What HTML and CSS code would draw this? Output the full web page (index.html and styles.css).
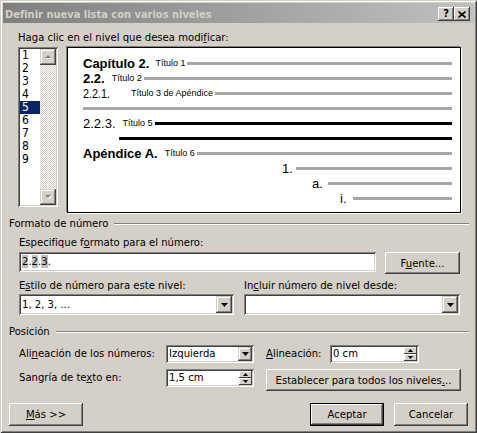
FILE: index.html
```html
<!DOCTYPE html>
<html lang="es">
<head>
<meta charset="utf-8">
<title>Definir nueva lista con varios niveles</title>
<link rel="stylesheet" href="styles.css">
</head>
<body>
<div class="window">
  <div class="titlebar">
    <span class="title">Definir nueva lista con varios niveles</span>
    <div class="cap-buttons">
      <span class="cap-btn">?</span>
      <span class="cap-btn"><svg width="8" height="7" viewBox="0 0 8 7"><path d="M0.5 0.5 L7.5 6.5 M7.5 0.5 L0.5 6.5" stroke="#000" stroke-width="1.6"/></svg></span>
    </div>
  </div>
  <div class="content">
    <section class="pick">
      <div class="label">Haga clic en el nivel que desea modi<u>f</u>icar:</div>
      <div class="pick-row">
        <div class="listbox">
          <ul class="levels">
            <li>1</li><li>2</li><li>3</li><li>4</li><li class="sel">5</li><li>6</li><li>7</li><li>8</li><li>9</li>
          </ul>
          <div class="vscroll">
            <span class="sbtn"><svg width="9" height="6" viewBox="0 0 9 6"><path d="M2 5 L5 2 L8 5 Z" fill="#fff"/><path d="M1 4 L4 1 L7 4 Z" fill="#808080"/></svg></span>
            <span class="track"></span>
            <span class="sbtn"><svg width="9" height="6" viewBox="0 0 9 6"><path d="M2 2 L8 2 L5 5 Z" fill="#fff"/><path d="M1 1 L7 1 L4 4 Z" fill="#808080"/></svg></span>
          </div>
        </div>
        <div class="preview">
          <div class="prow"><span class="num bold">Capítulo 2.</span><span class="ttl g6">Título 1</span><span class="ln"></span></div>
          <div class="prow"><span class="num bold">2.2.</span><span class="ttl g7">Título 2</span><span class="ln"></span></div>
          <div class="prow"><span class="num narrow">2.2.1.</span><span class="ttl g21">Título 3 de Apéndice</span><span class="ln"></span></div>
          <div class="prow"><span class="ln"></span></div>
          <div class="prow"><span class="num">2.2.3.</span><span class="ttl g7">Título 5</span><span class="ln black"></span></div>
          <div class="prow ind1"><span class="ln black"></span></div>
          <div class="prow"><span class="num bold">Apéndice A.</span><span class="ttl g7">Título 6</span><span class="ln"></span></div>
          <div class="prow ind2"><span class="num">1.</span><span class="ln gap3"></span></div>
          <div class="prow ind3"><span class="num">a.</span><span class="ln gap4"></span></div>
          <div class="prow ind4"><span class="num">i.</span><span class="ln gap6"></span></div>
        </div>
      </div>
    </section>

    <div class="group-title"><span>Formato de número</span><span class="groove"></span></div>
    <section class="group-body">
      <div class="field-label">Especifique f<u>o</u>rmato para el número:</div>
      <div class="format-row">
        <div class="textbox"><span class="fld">2</span>.<span class="fld">2</span>.<span class="fld">3</span>.</div>
        <button class="btn fuente">F<u>u</u>ente...</button>
      </div>
      <div class="two-col">
        <div class="col">
          <div class="field-label">E<u>s</u>tilo de número para este nivel:</div>
          <div class="select wide"><span class="val">1, 2, 3, ...</span><span class="drop"><svg width="7" height="4" viewBox="0 0 7 4"><path d="M0 0 H7 L3.5 4 Z" fill="#000"/></svg></span></div>
        </div>
        <div class="col">
          <div class="field-label">In<u>c</u>luir número de nivel desde:</div>
          <div class="select wide"><span class="val"></span><span class="drop"><svg width="7" height="4" viewBox="0 0 7 4"><path d="M0 0 H7 L3.5 4 Z" fill="#000"/></svg></span></div>
        </div>
      </div>
    </section>

    <div class="group-title pos-title"><span>Posición</span><span class="groove"></span></div>
    <section class="pos-grid">
      <div class="plabel">Ali<u>n</u>eación de los números:</div>
      <div class="select small"><span class="val">Izquierda</span><span class="drop"><svg width="7" height="4" viewBox="0 0 7 4"><path d="M0 0 H7 L3.5 4 Z" fill="#000"/></svg></span></div>
      <div class="spacer"></div>
      <div class="plabel"><u>A</u>lineación:</div>
      <div class="spin"><span class="val">0 cm</span><span class="spin-btns"><span class="sb"><svg width="5" height="3" viewBox="0 0 5 3"><path d="M2.5 0 L5 3 H0 Z" fill="#000"/></svg></span><span class="sb"><svg width="5" height="3" viewBox="0 0 5 3"><path d="M0 0 H5 L2.5 3 Z" fill="#000"/></svg></span></span></div>

      <div class="plabel">Sangría de te<u>x</u>to en:</div>
      <div class="spin"><span class="val">1,5 cm</span><span class="spin-btns"><span class="sb"><svg width="5" height="3" viewBox="0 0 5 3"><path d="M2.5 0 L5 3 H0 Z" fill="#000"/></svg></span><span class="sb"><svg width="5" height="3" viewBox="0 0 5 3"><path d="M0 0 H5 L2.5 3 Z" fill="#000"/></svg></span></span></div>
      <div class="spacer"></div>
      <button class="btn all-levels">Establecer para todos los niveles<u>.</u>..</button>
    </section>

    <div class="footer">
      <button class="btn foot"><u>M</u>ás &gt;&gt;</button>
      <span class="grow"></span>
      <button class="btn foot default">Aceptar</button>
      <button class="btn foot">Cancelar</button>
    </div>
  </div>
</div>
</body>
</html>
```

FILE: styles.css
```css
* { box-sizing: border-box; }
html, body { margin: 0; padding: 0; }
body {
  width: 477px;
  height: 433px;
  overflow: hidden;
  background: #d4d0c8;
  font-family: "DejaVu Sans Condensed", "DejaVu Sans", sans-serif;
  font-size: 11.2px;
  color: #000;
}
u { text-decoration: underline; text-underline-offset: 1px; }

.window {
  width: 477px;
  height: 433px;
  padding: 3px;
  background: #d4d0c8;
  box-shadow: inset 1px 1px #d4d0c8, inset -1px -1px #404040, inset 2px 2px #fff, inset -2px -2px #808080;
  display: flex;
  flex-direction: column;
}

/* title bar */
.titlebar {
  height: 20px;
  flex: none;
  background: linear-gradient(to right, #808080, #c0c0c0);
  display: flex;
  align-items: center;
  justify-content: space-between;
  padding: 0 4px 0 2px;
}
.title {
  color: #d4d0c8;
  font-weight: bold;
  font-size: 11px;
  padding-top: 2px;
}
.cap-buttons { display: flex; align-self: flex-end; margin-bottom: 2px; }
.cap-btn {
  width: 16px;
  height: 14px;
  background: #d4d0c8;
  box-shadow: inset -1px -1px #404040, inset 1px 1px #fff, inset -2px -2px #808080;
  display: flex;
  align-items: center;
  justify-content: center;
  font-weight: bold;
  font-size: 11px;
  line-height: 14px;
}

.content {
  flex: 1;
  display: flex;
  flex-direction: column;
  padding: 0 5px 0 6px;
}

/* pick section */
.pick { padding-left: 9px; margin-top: 8px; }
.label { line-height: 13px; height: 13px; }
.pick-row { display: flex; align-items: flex-start; margin-top: 3px; }

.listbox {
  width: 40px;
  height: 160px;
  padding: 2px;
  background: #fff;
  box-shadow: inset 1px 1px #808080, inset -1px -1px #fff, inset 2px 2px #404040, inset -2px -2px #d4d0c8;
  display: flex;
}
.levels { list-style: none; margin: 0; padding: 0; width: 20px; }
.levels li { height: 13px; line-height: 13px; padding-left: 2px; font-size: 12px; }
.levels li.sel { background: #0a246a; color: #fff; }
.vscroll { width: 16px; display: flex; flex-direction: column; }
.sbtn {
  width: 16px;
  height: 16px;
  flex: none;
  background: #d4d0c8;
  box-shadow: inset -1px -1px #404040, inset 1px 1px #d4d0c8, inset -2px -2px #808080, inset 2px 2px #fff;
  display: flex;
  align-items: center;
  justify-content: center;
}
.track {
  flex: 1;
  background: repeating-conic-gradient(#d4d0c8 0 25%, #fff 0 50%) 0 0 / 2px 2px;
}

.preview {
  margin-left: 9px;
  width: 394px;
  height: 166px;
  background: #fff;
  border: 1px solid #000;
  box-shadow: -1px -1px 0 #808080, 1px 1px 0 #fff;
  padding: 8px 8px 0 15px;
  font-family: "Liberation Sans", Arial, sans-serif;
}
.prow { height: 15px; display: flex; align-items: center; }
.num { font-size: 13px; line-height: 15px; white-space: nowrap; }
.num.bold { font-weight: bold; }
.num.narrow {
  display: inline-block;
  width: 27px;
  transform: scaleX(0.83);
  transform-origin: left center;
}
.ttl { font-size: 9px; line-height: 15px; white-space: nowrap; margin-right: 2px; }
.g6 { margin-left: 6px; }
.g7 { margin-left: 7px; }
.g21 { margin-left: 21px; }
.ln { flex: 1; height: 3px; background: #a6a6a6; }
.ln.black { background: #000; }
.ln.gap3 { margin-left: 3px; }
.ln.gap4 { margin-left: 5px; }
.ln.gap6 { margin-left: 6px; }
.ind1 { padding-left: 36px; }
.ind2 { padding-left: 199px; }
.ind3 { padding-left: 229px; }
.ind4 { padding-left: 257px; }

/* group titles */
.group-title {
  display: flex;
  align-items: center;
  height: 13px;
  line-height: 13px;
  margin-top: 4px;
}
.group-title span:first-child { white-space: nowrap; }
.groove {
  flex: 1;
  height: 2px;
  margin-left: 6px;
  border-top: 1px solid #808080;
  border-bottom: 1px solid #fff;
}
.pos-title { margin-top: 10px; }

.group-body { padding: 0 9px 0 10px; }
.field-label { line-height: 14px; height: 14px; white-space: nowrap; }
.group-body > .field-label { margin-top: 6px; }
.format-row { display: flex; align-items: flex-start; gap: 9px; margin-top: 2px; }

.textbox, .select, .spin {
  background: #fff;
  box-shadow: inset 1px 1px #808080, inset -1px -1px #fff, inset 2px 2px #404040, inset -2px -2px #d4d0c8;
  padding: 2px;
}
.textbox {
  width: 357px;
  height: 20px;
  line-height: 16px;
  padding-left: 3px;
}
.fld { background: #c0c0c0; }

.btn {
  font-family: inherit;
  font-size: 11.2px;
  color: #000;
  background: #d4d0c8;
  border: 0;
  margin: 0;
  padding: 0;
  box-shadow: inset -1px -1px #404040, inset 1px 1px #fff, inset -2px -2px #808080, inset 2px 2px #d4d0c8;
  white-space: nowrap;
}
.fuente { width: 75px; height: 22px; }

.two-col { display: flex; gap: 10px; margin-top: 5px; }
.two-col .col:first-child { width: 215px; }
.two-col .col:last-child { flex: 1; }
.select { display: flex; align-items: stretch; }
.select.wide { height: 21px; margin-top: 1px; }
.select .val { flex: 1; line-height: 17px; padding-left: 1px; white-space: nowrap; overflow: hidden; }
.drop {
  width: 16px;
  background: #d4d0c8;
  box-shadow: inset -1px -1px #404040, inset 1px 1px #d4d0c8, inset -2px -2px #808080, inset 2px 2px #fff;
  display: flex;
  align-items: center;
  justify-content: center;
}

/* position grid */
.pos-grid {
  display: grid;
  grid-template-columns: 147px 88px 12px 64px 131px;
  grid-template-rows: 18px 22px;
  row-gap: 6px;
  margin: 7px 0 0 10px;
}
.plabel { line-height: 18px; height: 18px; white-space: nowrap; }
.select.small { height: 18px; }
.select.small .val { line-height: 14px; }
.select.small .drop { width: 14px; }
.spin { display: flex; height: 18px; width: 88px; }
.pos-grid > .spin:nth-child(5) { width: 89px; }
.spin .val { flex: 1; line-height: 14px; padding-left: 1px; }
.spin-btns { width: 13px; display: flex; flex-direction: column; }
.sb {
  flex: 1;
  background: #d4d0c8;
  box-shadow: inset -1px -1px #404040, inset 1px 1px #fff;
  display: flex;
  align-items: center;
  justify-content: center;
}
.all-levels { grid-column: 4 / 6; width: 195px; height: 22px; }

.footer { display: flex; align-items: flex-start; margin-top: 12px; padding: 0 1px 0 0; gap: 10px; }
.grow { flex: 1; }
.foot { width: 74px; height: 23px; }
.default { box-shadow: inset 0 0 0 1px #000, inset -2px -2px #404040, inset 2px 2px #fff, inset -3px -3px #808080; }
```
